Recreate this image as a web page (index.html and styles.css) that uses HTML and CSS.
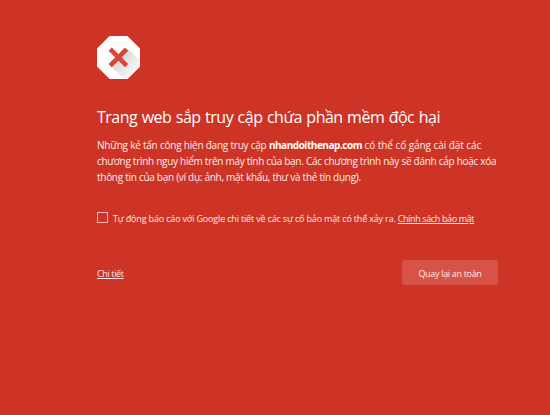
FILE: index.html
```
<!DOCTYPE html>
<html lang="vi">
<head>
<meta charset="utf-8">
<title>Trang web sắp truy cập chứa phần mềm độc hại</title>
<link rel="stylesheet" href="styles.css">
</head>
<body>
<main class="warning">
  <svg class="icon" viewBox="0 0 43 43" aria-hidden="true">
    <defs>
      <linearGradient id="shade" gradientUnits="userSpaceOnUse" x1="18" y1="18" x2="36" y2="36">
        <stop offset="0" stop-color="#cfcfcf"/>
        <stop offset="1" stop-color="#f6f6f6"/>
      </linearGradient>
    </defs>
    <path fill="#fff" d="M12.6 0H30.4L43 12.6V30.4L30.4 43H12.6L0 30.4V12.6Z"/>
    <path fill="url(#shade)" d="M31 13L43 25V30.4L30.4 43H27L13 29.5L20 21Z"/>
    <path stroke="#dc4437" stroke-width="4.6" fill="none" d="M13.2 13.2L29.6 29.6M29.6 13.2L13.2 29.6"/>
  </svg>
  <h1 class="title">Trang web sắp truy cập chứa phần mềm độc hại</h1>
  <p class="message">
    <span class="line first">Những kẻ tấn công hiện đang truy cập <strong>nhandoithenap.com</strong><span class="rest"> có thể cố gắng cài đặt các</span></span>
    <span class="line">chương trình nguy hiểm trên máy tính của bạn. Các chương trình này sẽ đánh cắp hoặc xóa</span>
    <span class="line">thông tin của bạn (ví dụ: ảnh, mật khẩu, thư và thẻ tín dụng).</span>
  </p>
  <div class="report">
    <span class="checkbox" role="checkbox" aria-checked="false"></span>
    <span class="label">Tự động báo cáo với Google chi tiết về các sự cố bảo mật có thể xảy ra.</span>
    <a class="link policy" href="#">Chính sách bảo mật</a>
  </div>
  <div class="actions">
    <a class="link details" href="#">Chi tiết</a>
    <button class="button" type="button">Quay lại an toàn</button>
  </div>
</main>
</body>
</html>
```
FILE: styles.css
```
* { box-sizing: border-box; }
body {
  margin: 0;
  min-height: 415px;
  background: #ce3426;
  color: #fff;
  font-family: "Open Sans", "Noto Sans", sans-serif;
}
.warning { width: 401px; margin-left: 97px; padding-top: 36px; }
.icon { display: block; width: 43px; height: 43px; }
.title {
  margin: 26px 0 0;
  font-size: 16px;
  font-weight: 400;
  line-height: 24px;
  letter-spacing: -0.5px;
  word-spacing: 0.8px;
  white-space: nowrap;
}
.message { margin: 8px 0 0; font-size: 10px; line-height: 16px; letter-spacing: -0.28px; color: #fdeeec; }
.message strong { color: #fff; font-weight: 700; letter-spacing: -0.47px; }
.line { display: block; white-space: nowrap; }
.first { letter-spacing: -0.22px; }
.rest { letter-spacing: -0.06px; }
.report {
  display: flex;
  align-items: center;
  height: 14px;
  margin-top: 27px;
  font-size: 9px;
  line-height: 14px;
  letter-spacing: -0.17px;
  color: #fce8e5;
  white-space: nowrap;
}
.checkbox { flex: none; width: 11px; height: 11px; margin: -3px 5px 0 0; border: 1px solid #efb5af; }
.policy { margin-left: 2px; }
.link { color: #fce8e5; letter-spacing: -0.37px; text-decoration: underline; text-underline-offset: 1px; }
.actions {
  display: flex;
  align-items: center;
  justify-content: space-between;
  height: 25px;
  margin-top: 34px;
  font-size: 9px;
}
.details { padding-top: 1px; }
.button {
  width: 96px;
  height: 25px;
  padding: 1px 0 0;
  border: 0;
  border-radius: 2px;
  background: #d85347;
  color: #fce8e5;
  font: inherit;
  letter-spacing: -0.32px;
  white-space: nowrap;
}
```
